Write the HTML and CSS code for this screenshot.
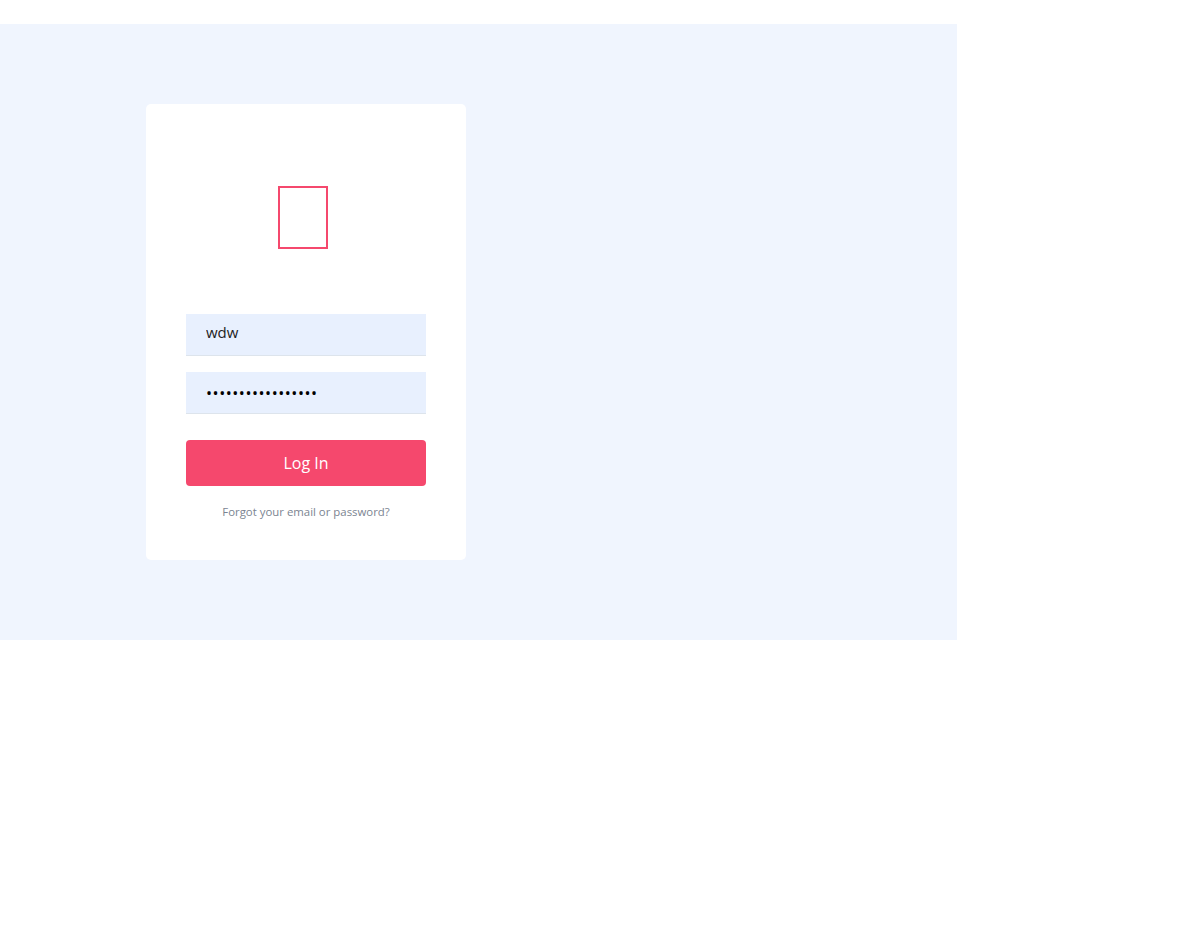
FILE: index.html
```html
<!DOCTYPE html>
<html lang="en">
<head>
<meta charset="utf-8">
<title>Log In</title>
<link rel="stylesheet" href="styles.css">
</head>
<body>
<main class="stage">
  <section class="card">
    <div class="logo-wrap"><div class="logo"></div></div>
    <form class="form">
      <input class="field field-text" type="text" value="wdw">
      <input class="field field-pass" type="password" value="aaaaaaaaaaaaaaaaa">
      <button class="btn" type="button">Log In</button>
      <p class="forgot">Forgot your email or password?</p>
    </form>
  </section>
</main>
</body>
</html>
```
FILE: styles.css
```css
html, body { margin: 0; padding: 0; background: #ffffff; }
body {
  font-family: "Open Sans", "Noto Sans", sans-serif;
  padding-top: 24px;
}
.stage {
  width: 957px;
  height: 616px;
  background: #f0f5fe;
  padding: 80px 0 0 146px;
  box-sizing: border-box;
}
.card {
  width: 320px;
  height: 456px;
  background: #ffffff;
  border-radius: 5px;
  box-sizing: border-box;
  padding: 82px 40px 0;
}
.logo-wrap {
  display: flex;
  justify-content: flex-start;
  padding-left: 92px;
}
.logo {
  width: 50px;
  height: 63px;
  box-sizing: border-box;
  border: 2px solid #f5486d;
}
.form {
  margin-top: 65px;
  display: flex;
  flex-direction: column;
}
.field {
  width: 240px;
  height: 42px;
  box-sizing: border-box;
  border: none;
  border-bottom: 1px solid #dde4ec;
  background: #e8f0fe;
  padding: 0 20px;
  font-family: "Open Sans", sans-serif;
  font-size: 15px;
  color: #222;
  margin: 0 0 16px;
  outline: none;
}
.field-text { padding-bottom: 5px; }
.field-pass {
  margin-bottom: 26px;
  font-size: 16px;
  letter-spacing: 0.55px;
  color: #000;
}
.btn {
  width: 240px;
  height: 46px;
  border: none;
  border-radius: 4px;
  background: #f5486d;
  color: #ffffff;
  font-family: "Open Sans", sans-serif;
  font-size: 16px;
}
.forgot {
  margin: 18px 0 0;
  text-align: center;
  font-size: 11.4px;
  color: #7b8491;
}
```
